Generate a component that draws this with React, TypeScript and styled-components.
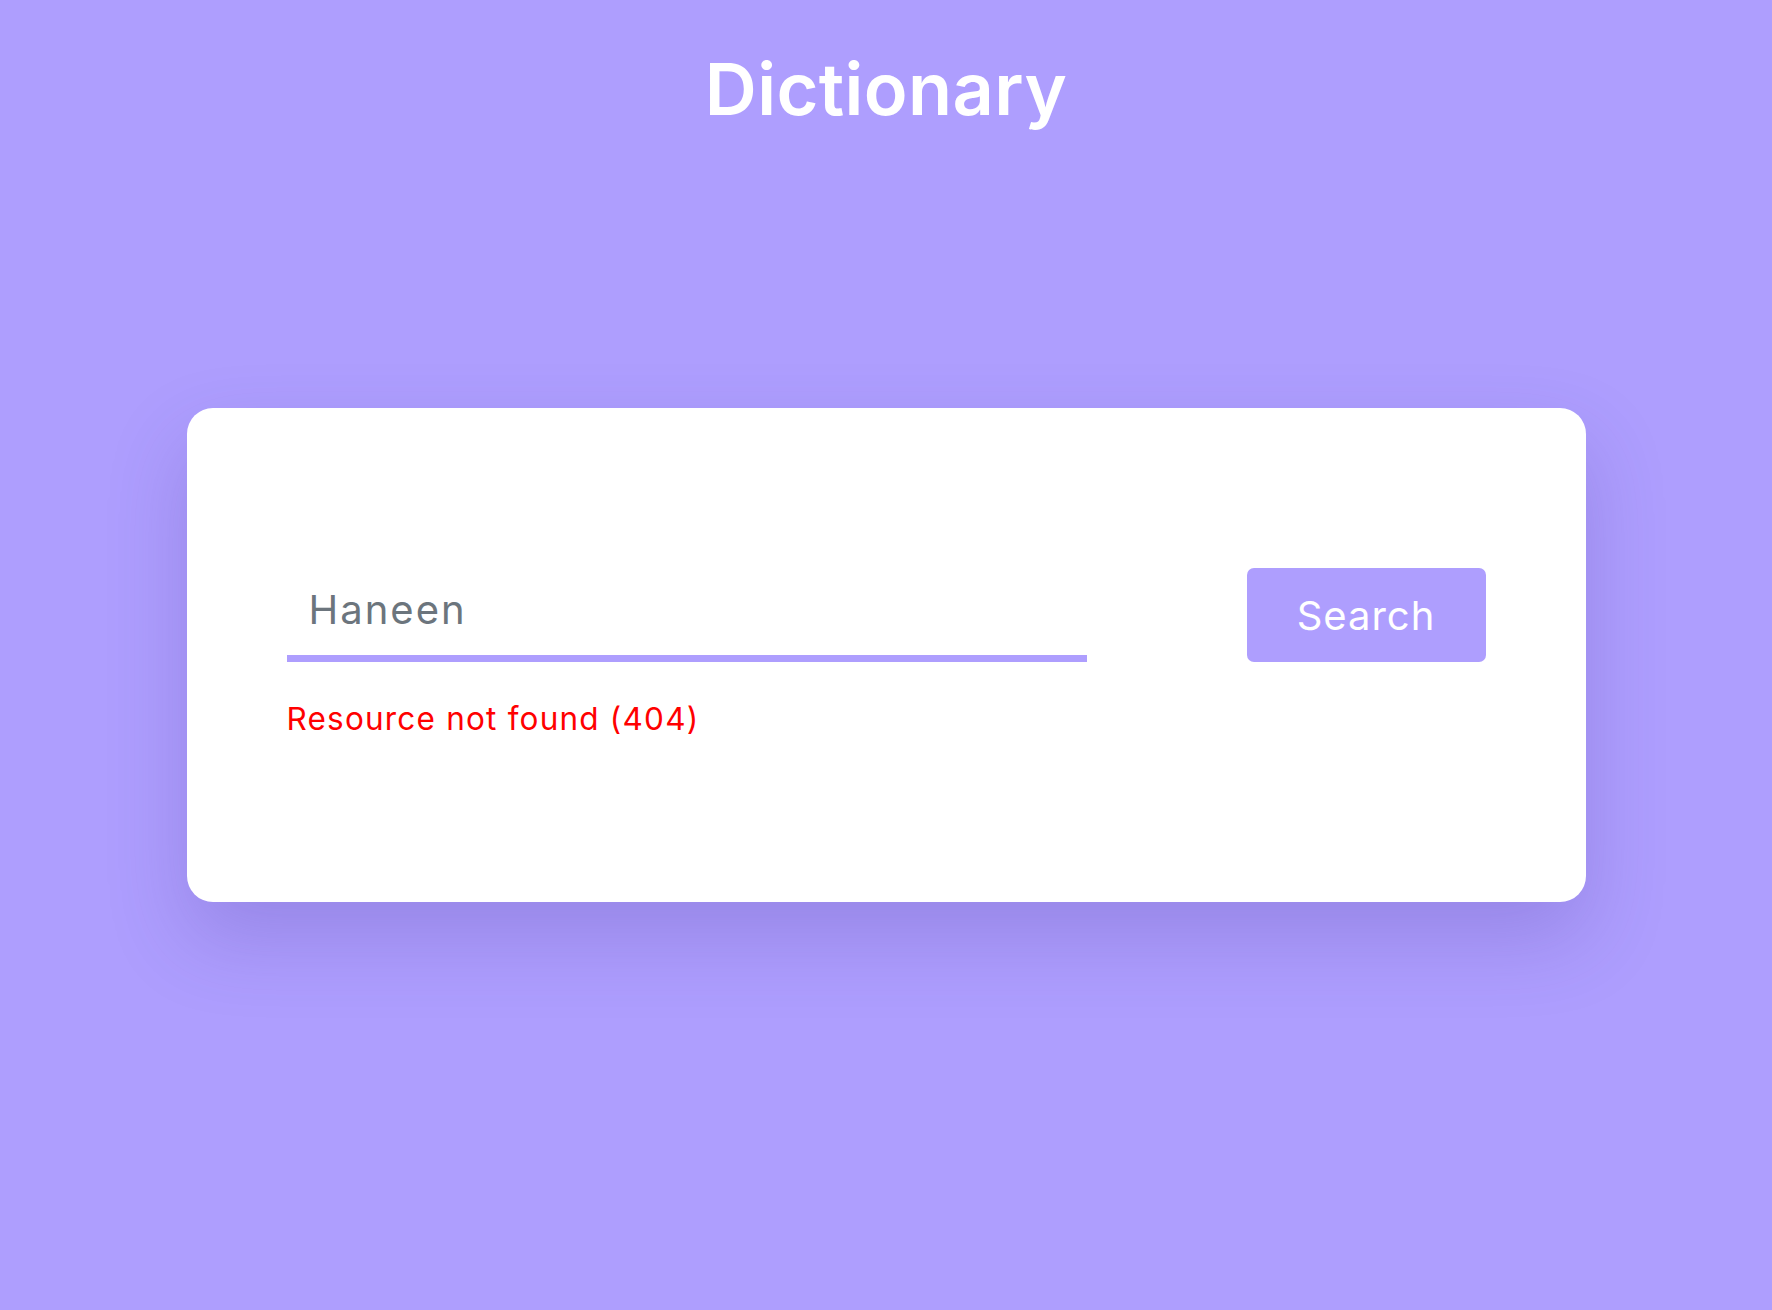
// Vendors
import React, { useState } from 'react';
import styled, { createGlobalStyle } from 'styled-components';

// Styles
const GlobalStyle = createGlobalStyle`
  html, body {
    margin: 0;
    padding: 0;
    background-color: #ae9efe;
  }
  * {
    box-sizing: border-box;
  }
`;

const Page = styled.div`
  min-height: 100vh;
  display: flex;
  flex-direction: column;
  align-items: center;
  font-family: Inter, 'Open Sans', Arial, sans-serif;
  background-color: #ae9efe;
`;

const Title = styled.h1`
  margin: 0;
  padding-top: 53px;
  font-size: 72px;
  line-height: 72px;
  font-weight: 600;
  letter-spacing: 0.4px;
  color: #ffffff;
`;

const Card = styled.div`
  margin-top: 283px;
  width: 1399px;
  height: 494px;
  padding: 160px 100px 0;
  background-color: #ffffff;
  border-radius: 26px;
  box-shadow: 0 36px 80px rgba(70, 50, 150, 0.22);
`;

const SearchForm = styled.form`
  display: flex;
  justify-content: space-between;
  align-items: flex-start;
`;

const InputColumn = styled.div`
  display: flex;
  flex-direction: column;
  width: 800px;
`;

const WordInput = styled.input`
  height: 94px;
  width: 100%;
  padding: 0 0 4px 22px;
  border: none;
  border-bottom: 7px solid #ae9efe;
  outline: none;
  font-family: inherit;
  font-size: 40px;
  letter-spacing: 2px;
  color: #6c757d;
  background: transparent;
`;

const ErrorText = styled.p`
  margin: 37px 0 0;
  font-size: 31.5px;
  letter-spacing: 1.2px;
  color: #ff0000;
`;

const SearchButton = styled.button`
  width: 239px;
  height: 94px;
  border: none;
  border-radius: 7px;
  background-color: #ae9efe;
  color: #ffffff;
  font-family: inherit;
  font-size: 40px;
  letter-spacing: 1px;
  cursor: pointer;
`;

const App = (): JSX.Element => {
  const [word, setWord] = useState('Haneen');

  return (
    <Page>
      <GlobalStyle />
      <Title>Dictionary</Title>
      <Card>
        <SearchForm onSubmit={(e) => e.preventDefault()}>
          <InputColumn>
            <WordInput value={word} onChange={(e) => setWord(e.target.value)} />
            <ErrorText>Resource not found (404)</ErrorText>
          </InputColumn>
          <SearchButton type="submit">Search</SearchButton>
        </SearchForm>
      </Card>
    </Page>
  );
};

export default App;
